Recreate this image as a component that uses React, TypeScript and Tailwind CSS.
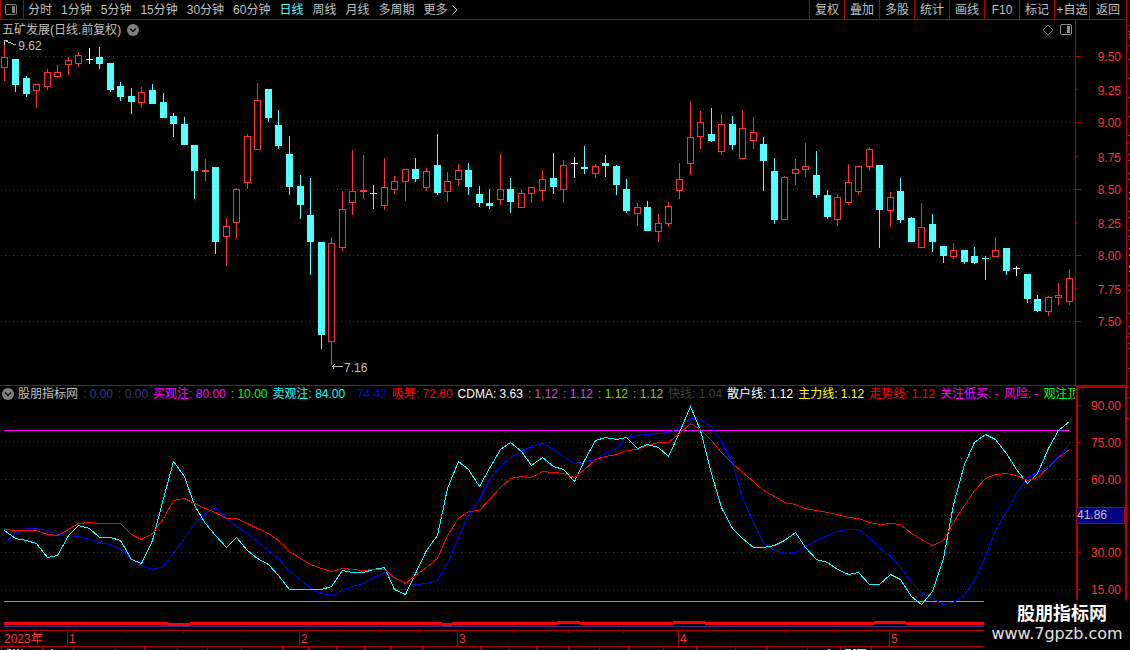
import { Fragment } from "react";

type Candle = [high: number, top: number, bottom: number, low: number, kind: "up" | "down" | "flat"];

const periods = ["分时", "1分钟", "5分钟", "15分钟", "30分钟", "60分钟", "日线", "周线", "月线", "多周期"];
const tools = ["复权", "叠加", "多股", "统计", "画线", "F10", "标记", "+自选"];

const candles: Candle[] = [
  [43, 57, 68, 81, "up"], [59, 59, 85, 92, "down"], [76, 78, 94, 97, "down"], [84, 84, 91, 108, "up"],
  [69, 72, 87, 90, "up"], [65, 72, 77, 78, "up"], [57, 60, 65, 75, "up"], [52, 55, 64, 67, "up"],
  [48, 59, 60, 64, "flat"], [47, 57, 64, 69, "down"], [63, 63, 90, 92, "down"], [82, 86, 97, 101, "down"],
  [88, 96, 102, 114, "down"], [87, 92, 103, 108, "up"], [84, 90, 104, 104, "down"], [93, 102, 118, 118, "down"],
  [113, 116, 124, 137, "down"], [117, 124, 145, 145, "down"], [145, 145, 171, 199, "down"], [159, 170, 172, 181, "up"],
  [167, 167, 242, 254, "down"], [218, 226, 237, 266, "up"], [188, 189, 223, 239, "up"], [134, 136, 183, 189, "up"],
  [83, 100, 150, 150, "up"], [89, 89, 118, 122, "down"], [110, 125, 146, 149, "down"], [136, 154, 187, 195, "down"],
  [175, 186, 205, 219, "down"], [178, 215, 242, 275, "down"], [242, 242, 335, 349, "down"], [237, 243, 342, 365, "up"],
  [191, 209, 248, 251, "up"], [150, 191, 203, 215, "up"], [155, 190, 192, 199, "up"], [185, 193, 194, 209, "down"],
  [158, 187, 206, 210, "up"], [176, 181, 190, 194, "up"], [169, 169, 182, 201, "up"], [158, 169, 179, 182, "down"],
  [168, 171, 188, 191, "up"], [134, 165, 193, 195, "down"], [172, 181, 192, 202, "up"], [164, 170, 180, 186, "up"],
  [163, 170, 187, 195, "down"], [186, 194, 203, 207, "down"], [189, 203, 206, 209, "down"], [154, 189, 200, 205, "up"],
  [178, 189, 202, 213, "down"], [190, 193, 208, 208, "up"], [187, 187, 194, 203, "up"], [170, 179, 191, 201, "up"],
  [153, 178, 187, 194, "down"], [160, 165, 190, 203, "up"], [157, 163, 164, 178, "flat"], [146, 167, 169, 174, "down"],
  [164, 166, 174, 178, "up"], [155, 163, 166, 177, "down"], [165, 166, 185, 195, "down"], [179, 189, 211, 213, "down"],
  [203, 207, 214, 226, "up"], [201, 207, 231, 231, "down"], [214, 223, 232, 242, "up"], [202, 206, 224, 227, "up"],
  [163, 179, 191, 199, "up"], [101, 137, 164, 175, "up"], [111, 122, 137, 149, "up"], [108, 134, 141, 142, "down"],
  [114, 124, 152, 155, "up"], [116, 124, 145, 150, "down"], [110, 128, 159, 159, "up"], [117, 132, 141, 149, "up"],
  [137, 144, 161, 191, "down"], [158, 171, 220, 224, "down"], [176, 177, 220, 220, "up"], [159, 169, 174, 185, "up"],
  [143, 166, 170, 177, "up"], [151, 175, 195, 198, "down"], [190, 195, 217, 219, "down"], [194, 197, 220, 226, "up"],
  [164, 182, 203, 205, "up"], [166, 166, 192, 195, "up"], [147, 149, 167, 171, "up"], [165, 165, 210, 248, "down"],
  [192, 197, 211, 227, "up"], [178, 191, 220, 223, "down"], [217, 218, 242, 242, "down"], [203, 227, 248, 248, "up"],
  [214, 224, 242, 252, "down"], [246, 246, 256, 263, "down"], [243, 250, 257, 259, "up"], [250, 250, 262, 264, "down"],
  [247, 256, 263, 264, "down"], [256, 258, 259, 280, "down"], [237, 250, 257, 257, "up"], [248, 248, 271, 275, "down"],
  [266, 268, 269, 276, "flat"], [274, 274, 299, 303, "down"], [295, 299, 311, 312, "down"], [296, 297, 312, 316, "up"],
  [283, 295, 298, 305, "up"], [269, 278, 302, 305, "up"],
];

const fastLine = [
  530, 538, 540, 543, 557, 555, 535, 525, 528, 537, 537, 540, 559, 563, 540, 498, 461, 476, 505, 523, 535, 547, 537, 550,
  558, 564, 575, 589, 589, 589, 589, 586, 570, 572, 572, 569, 567, 589, 594, 573, 550, 535, 488, 461, 469, 486, 468, 449,
  442, 451, 465, 457, 466, 469, 481, 460, 440, 437, 439, 437, 448, 444, 447, 456, 432, 406, 430, 473, 507, 528, 538, 547,
  547, 545, 540, 532, 547, 559, 562, 569, 574, 572, 584, 584, 574, 579, 596, 604, 591, 558, 504, 464, 442, 434, 439, 453,
  469, 483, 473, 448, 430, 421,
];

const chipLine = [
  529, 530, 530, 530, 534, 535, 529, 523, 522, 523, 523, 523, 534, 539, 533, 518, 500, 498, 503, 508, 512, 518, 518, 523,
  528, 533, 540, 551, 558, 564, 568, 571, 568, 569, 570, 569, 569, 577, 583, 575, 567, 558, 535, 518, 511, 510, 499, 487,
  478, 476, 477, 471, 472, 473, 477, 469, 459, 456, 454, 450, 449, 445, 442, 442, 433, 423, 429, 440, 452, 463, 472, 481,
  490, 496, 502, 504, 508, 510, 512, 514, 517, 518, 522, 524, 523, 524, 533, 539, 545, 540, 522, 505, 490, 478, 474, 473,
  475, 480, 477, 467, 457, 449,
];

const slowLine = [
  543, 533, 528, 528, 530, 534, 535, 536, 539, 542, 544, 549, 558, 565, 569, 566, 553, 538, 523, 513, 507, 518, 526, 533,
  541, 550, 558, 571, 579, 588, 593, 595, 590, 586, 583, 577, 572, 577, 582, 584, 583, 580, 563, 537, 514, 499, 479, 466,
  457, 451, 446, 443, 449, 456, 463, 461, 459, 453, 448, 437, 435, 434, 433, 432, 427, 418, 419, 426, 441, 463, 497, 522,
  542, 550, 553, 552, 546, 540, 535, 531, 529, 529, 537, 547, 556, 567, 582, 592, 598, 604, 602, 594, 580, 556, 530, 511,
  493, 477, 472, 466, 456, 444,
];

const legend = [
  { text: ": 0.00", color: "text-[#383888]" },
  { text: ": 0.00", color: "text-[#383888]" },
  { text: "买观注: 80.00", color: "text-[#ff00ff]" },
  { text: ": 10.00", color: "text-[#00ff00]" },
  { text: "卖观注: 84.00", color: "text-[#00ffff]" },
  { text: ": 74.42", color: "text-[#0000ff]" },
  { text: "吸筹: 72.60", color: "text-[#ff0000]" },
  { text: "CDMA: 3.63", color: "text-white" },
  { text: ": 1.12", color: "text-[#c850dc]" },
  { text: ": 1.12", color: "text-[#c850dc]" },
  { text: ": 1.12", color: "text-[#8cd200]" },
  { text: ": 1.12", color: "text-[#8cd200]" },
  { text: "快线: 1.04", color: "text-[#404040]" },
  { text: "散户线: 1.12", color: "text-white" },
  { text: "主力线: 1.12", color: "text-[#ffff00]" },
  { text: "走势线: 1.12", color: "text-[#ff0000]" },
  { text: "关注低买: -", color: "text-[#ff00ff]" },
  { text: "风险: -", color: "text-[#ff00ff]" },
  { text: "观注顶", color: "text-[#00ff00]" },
];

const priceGrid = [56, 122, 189, 255, 321];
const priceLabels = [
  ["9.50", 56], ["9.25", 90], ["9.00", 122], ["8.75", 157], ["8.50", 189],
  ["8.25", 223], ["8.00", 255], ["7.75", 289], ["7.50", 321],
] as const;
const indicatorGrid = [442, 479, 515, 552, 589];
const indicatorLabels = [["90.00", 405], ["75.00", 442], ["60.00", 479], ["30.00", 552], ["15.00", 589]] as const;

const months = [
  { label: "2023年", span: 67 },
  { label: "1", span: 232 },
  { label: "2", span: 158 },
  { label: "3", span: 221 },
  { label: "4", span: 211 },
  { label: "5", span: 241 },
];
const weekTicks = [125, 183, 241, 339, 378, 418, 512, 568, 623, 731, 784, 836];
const footTicks = [
  1, 42, 73, 115, 144, 177, 207, 241, 282, 308, 336, 364, 390, 422, 480, 509, 536, 568, 599, 628, 663, 696, 735, 766, 807,
  840, 871,
];
const sideMarks = [
  31, 34, 37, 59, 78, 97, 116, 135, 154, 160, 173, 179, 192, 198, 211, 217, 230, 236, 248, 255, 266, 271, 285, 290, 313,
  326, 333, 343, 348, 368,
];

const candleColors = { up: "#ff3232", down: "#54ffff", flat: "#ffffff" };
const line = "#b00000";

const xAt = (i: number) => Math.round(4.44 + i * 10.54);
const toPoints = (values: number[]) => values.map((y, i) => `${xAt(i) + 0.5},${y + 0.5}`).join(" ");

const PanelIcon = ({ color }: { color: string }) => (
  <svg width="12" height="12" viewBox="0 0 12 12" aria-hidden="true">
    <rect x="0.5" y="0.5" width="11" height="10" rx="1.5" fill="none" stroke={color} />
    <rect x="7" y="2" width="3" height="7" fill={color} />
  </svg>
);

const DropIcon = () => (
  <svg width="12" height="12" viewBox="0 0 12 12" aria-hidden="true">
    <circle cx="6" cy="6" r="6" fill="#808080" />
    <path d="M3 4.5 6 7.5 9 4.5" fill="none" stroke="#101010" strokeWidth="1.4" />
  </svg>
);

const Grid = ({ rows }: { rows: number[] }) => (
  <>
    {rows.map((y) => (
      <line key={y} x1="1" x2="1075" y1={y + 0.5} y2={y + 0.5} stroke={line} strokeDasharray="1 3" />
    ))}
  </>
);

const Header = () => (
  <header className="flex h-5 border-b border-l border-[#b00000]">
    <button aria-label="侧栏" className="flex w-[23px] shrink-0 items-center border-r border-[#b00000] pl-1">
      <PanelIcon color="#808080" />
    </button>
    <nav className="flex grow items-center gap-[9px] overflow-hidden pl-1">
      {periods.map((name) => (
        <button key={name} className={name === "日线" ? "text-[#54ffff]" : ""}>
          {name}
        </button>
      ))}
      <button className="flex items-center gap-1">
        更多
        <svg width="6" height="10" viewBox="0 0 6 10" aria-hidden="true">
          <path d="M0.5 0.5 5 5 0.5 9.5" fill="none" stroke="#c0c0c0" />
        </svg>
      </button>
    </nav>
    {tools.map((name) => (
      <button key={name} className="w-[35px] shrink-0 border-l border-[#b00000]">
        {name}
      </button>
    ))}
    <button className="w-[37px] shrink-0 border-l border-[#b00000]">返回</button>
  </header>
);

const PriceChart = () => (
  <div className="relative">
    <svg
      className="block h-[347px] w-full"
      viewBox="0 38 1075 347"
      preserveAspectRatio="none"
      shapeRendering="crispEdges"
    >
      <Grid rows={priceGrid} />
      {candles.map(([high, top, bottom, low, kind], i) => {
        const x = xAt(i);
        const color = candleColors[kind];
        return (
          <Fragment key={i}>
            <rect x={x} y={high} width="1" height={top - high} fill={color} />
            <rect x={x} y={bottom} width="1" height={low - bottom} fill={color} />
            {kind === "up" && bottom - top > 2 ? (
              <rect x={x - 2.5} y={top + 0.5} width="6" height={bottom - top - 1} fill="none" stroke={color} />
            ) : (
              <rect x={x - 3} y={top} width="7" height={bottom - top} fill={color} />
            )}
          </Fragment>
        );
      })}
      <path d="M4.5 45v-4.500h3M4.500 40.500l5 2 6 2.500M332 366.500h11M334.500 364.500l-2 2 2 3" fill="none" stroke="#c0c0c0" />
    </svg>
    <span className="absolute top-0 left-[1.7%] leading-4">9.62</span>
    <span className="absolute bottom-[9px] left-[32%] leading-4">7.16</span>
  </div>
);

const PricePane = () => (
  <section className="flex border-b border-[#b00000]">
    <div className="min-w-0 grow">
      <div className="flex h-[18px] items-center gap-[6px] pt-px pl-[2px]">
        <h1>五矿发展(日线.前复权)</h1>
        <button aria-label="选择">
          <DropIcon />
        </button>
        <button aria-label="标注" className="ml-auto">
          <svg width="12" height="12" viewBox="0 0 12 12" aria-hidden="true">
            <path d="M6 1 11 6 6 11 1 6Z" fill="none" stroke="#808080" />
          </svg>
        </button>
        <button aria-label="面板" className="mr-[3px]">
          <PanelIcon color="#909090" />
        </button>
      </div>
      <PriceChart />
    </div>
    <svg className="h-[365px] w-[51px] shrink-0" viewBox="0 20 51 365" shapeRendering="crispEdges">
      <rect x="0" y="20" width="1" height="365" fill={line} />
      {priceGrid.map((y) => (
        <rect key={y} x="1" y={y} width="5" height="1" fill={line} />
      ))}
      {[89, 156, 222, 288].map((y) => (
        <rect key={y} x="1" y={y} width="2" height="1" fill={line} />
      ))}
      {priceLabels.map(([label, y]) => (
        <text key={label} x="46" y={y + 5} textAnchor="end" fontSize="12" fill="#ff3232">
          {label}
        </text>
      ))}
    </svg>
  </section>
);

const IndicatorPane = () => (
  <section className="flex">
    <div className="min-w-0 grow">
      <div className="flex h-4 items-center gap-[5px] overflow-hidden whitespace-nowrap pl-[2px]">
        <button aria-label="指标" className="shrink-0">
          <DropIcon />
        </button>
        <h2 className="-ml-[1px]">股朋指标网</h2>
        {legend.map((item, i) => (
          <span key={i} className={item.color}>
            {item.text}
          </span>
        ))}
      </div>
      <svg
        className="block h-[228px] w-full"
        viewBox="0 402 1075 228"
        preserveAspectRatio="none"
        shapeRendering="crispEdges"
        fill="none"
      >
        <Grid rows={indicatorGrid} />
        <path d="M4 430.500H1069" stroke="#ff00ff" />
        <path d="M4 601.500H1069" stroke="#00ff00" />
        <path d="M4 626.500H1069" stroke="#303090" />
        <path
          d="M4 623.500H168M168 624.500H190M190 623.500H442M442 624.500H452M452 623.500H557M557 622.500H580M580 623.500H673M673 622.500H705M705 623.500H874M874 622.500H906M906 623.500H1069"
          stroke="#ff0000"
          strokeWidth="3"
        />
        <polyline points={toPoints(slowLine)} stroke="#0000ff" />
        <polyline points={toPoints(fastLine)} stroke="#00ffff" />
        <polyline points={toPoints(chipLine)} stroke="#ff0000" />
      </svg>
    </div>
    <svg className="h-[244px] w-[51px] shrink-0" viewBox="0 386 51 244" shapeRendering="crispEdges">
      <path d="M51 386.500H1.500V630M50.500 386V630" fill="none" stroke={line} strokeWidth="2" />
      {[405, ...indicatorGrid].map((y) => (
        <rect key={y} x="2" y={y} width="4" height="1" fill={line} />
      ))}
      {[424, 461, 497, 534, 571].map((y) => (
        <rect key={y} x="2" y={y} width="1" height="1" fill={line} />
      ))}
      {indicatorLabels.map(([label, y]) => (
        <text key={label} x="46" y={y + 5} textAnchor="end" fontSize="12" fill="#ff3232">
          {label}
        </text>
      ))}
      <rect x="1.5" y="507.5" width="48" height="16" fill="#000080" stroke={line} />
      <text x="2" y="519" fontSize="12" fill="#c0c0c0">
        41.86
      </text>
    </svg>
  </section>
);

const TimeAxis = () => (
  <footer className="relative">
    <div className="flex h-[17px] border-y border-[#b00000] text-[#ff3232]">
      {months.map(({ label, span }, i) => (
        <span
          key={label}
          className={i === 0 ? "shrink-0 pl-1" : "shrink-0 border-l border-[#b00000] pl-px"}
          style={{ width: `${(span / 1130) * 100}%` }}
        >
          {label}
        </span>
      ))}
    </div>
    <svg
      className="absolute inset-x-0 top-0 h-5 w-full"
      viewBox="0 630 1130 20"
      preserveAspectRatio="none"
      shapeRendering="crispEdges"
      aria-hidden="true"
    >
      {weekTicks.map((x) => (
        <rect key={x} x={x} y="631" width="1" height="2" fill={line} />
      ))}
      {footTicks.map((x) => (
        <rect key={x} x={x} y="647" width="1" height="3" fill={line} />
      ))}
      <path d="M7 649.500h4M13 649.500h2M17 649.500h2M21 649.500h1M51 649.500h2M828 649.500h2" stroke="#c0c0c0" />
      <path d="M845 649.500h6M853 649.500h3M857 649.500h9" stroke="#54ffff" />
    </svg>
    <div className="h-[3px]" />
  </footer>
);

export default function App() {
  return (
    <main className="relative bg-black font-['Liberation_Sans','Noto_Sans_CJK_SC',sans-serif] text-[12px] leading-4 whitespace-nowrap text-[#c0c0c0]">
      <div className="flex">
        <div className="min-w-0 grow">
          <Header />
          <PricePane />
          <IndicatorPane />
        </div>
        <svg className="h-[630px] w-1 shrink-0" viewBox="0 0 4 630" shapeRendering="crispEdges" aria-hidden="true">
          <rect width="1" height="630" fill={line} />
          {[25, 45, 142, 239, 336, 397, 418].map((y) => (
            <rect key={y} x="1" y={y} width="3" height="1" fill={line} />
          ))}
          {sideMarks.map((y) => (
            <rect key={y} x="3" y={y} width="1" height="1" fill="#c0c0c0" />
          ))}
        </svg>
      </div>
      <TimeAxis />
      <aside className="absolute right-0 bottom-0 flex h-[50px] w-[146px] flex-col items-center bg-black pt-1 text-white">
        <strong className="pl-[10px] text-[18px] leading-5 font-bold">股朋指标网</strong>
        <a href="#" className="font-['DejaVu_Sans',sans-serif] text-[16px] leading-5 text-[#e8e0e0]">
          www.7gpzb.com
        </a>
      </aside>
    </main>
  );
}
